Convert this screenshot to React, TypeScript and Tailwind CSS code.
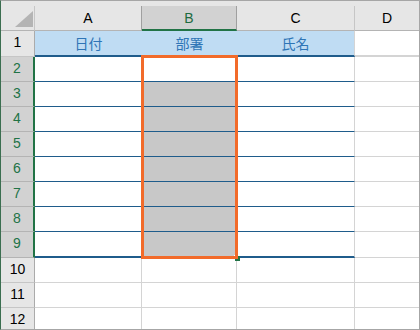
const LATIN = "font-['Liberation_Sans',Arial,sans-serif]";
const CJK = "font-['Noto_Sans_CJK_JP','Noto_Sans_CJK_SC',sans-serif]";

const ROWS = [1, 2, 3, 4, 5, 6, 7, 8, 9, 10, 11, 12];
const TITLES = ['日付', '部署', '氏名'];

function HeaderRow() {
  return (
    <div className="flex h-[30px] pt-[5px] bg-[#e6e6e6]">
      {/* select-all corner */}
      <div className="w-[34px] h-[25px] flex items-end justify-end pr-px pb-[3px] border-r border-r-[#c6c6c6] border-b border-b-[#b4b4b4]">
        <svg width="18" height="16" viewBox="0 0 18 16">
          <polygon points="0,16 18,16 18,0" fill="#b4b4b4" />
        </svg>
      </div>
      <div className={`w-[107px] h-[25px] flex items-center justify-center pt-px text-[14px] text-black border-r border-r-[#a0a0a0] border-b border-b-[#b4b4b4] ${LATIN}`}>
        A
      </div>
      <div className={`w-[95px] h-[25px] flex items-center justify-center pt-[2px] text-[14px] text-[#1e6b3f] bg-[#d2d2d2] border-r border-r-[#a0a0a0] border-b-2 border-b-[#217346] ${LATIN}`}>
        B
      </div>
      <div className={`w-[118px] h-[25px] flex items-center justify-center pt-px text-[14px] text-black border-r border-r-[#c6c6c6] border-b border-b-[#b4b4b4] ${LATIN}`}>
        C
      </div>
      <div className={`flex-1 h-[25px] flex items-center justify-center pt-px text-[14px] text-black border-b border-b-[#b4b4b4] ${LATIN}`}>
        D
      </div>
    </div>
  );
}

function BodyRow({ n }: { n: number }) {
  const table = n <= 9;
  const sel = n >= 2 && n <= 9;
  const thick = n === 1 || n === 9;

  const h = thick ? 'h-[26px]' : 'h-[25px]';
  const line = !table
    ? 'border-b border-b-[#d4d4d4]'
    : thick
      ? 'border-b-2 border-b-[#1f5c8b]'
      : 'border-b border-b-[#1f5c8b]';
  const sep = table ? '' : 'border-r border-r-[#d4d4d4]';
  const head = sel
    ? 'bg-[#d2d2d2] text-[#217346] border-r-2 border-r-[#217346] border-b border-b-[#b4b4b4]'
    : 'bg-[#e6e6e6] text-black border-r border-r-[#ababab] border-b border-b-[#c6c6c6]';
  const fillA = n === 1 ? 'bg-[#bfdcf3]' : 'bg-white';
  const fillB = n === 1 ? 'bg-[#bfdcf3]' : n >= 3 && n <= 9 ? 'bg-[#c8c8c8]' : 'bg-white';

  const title = (i: number) =>
    n === 1 ? <span className={`text-[14px] text-[#2e75b6] ${CJK}`}>{TITLES[i]}</span> : null;

  return (
    <div className={`flex ${h}`}>
      <div className={`w-[34px] flex items-center justify-center pb-[2px] text-[14px] ${head} ${LATIN}`}>{n}</div>
      <div className={`w-[107px] flex items-center justify-center ${fillA} ${line} ${sep}`}>{title(0)}</div>
      <div className={`w-[95px] flex items-center justify-center ${fillB} ${line} ${sep}`}>{title(1)}</div>
      <div className={`w-[118px] flex items-center justify-center ${fillA} ${line} border-r border-r-[#d4d4d4]`}>{title(2)}</div>
      <div className={`flex-1 bg-white ${n === 1 ? 'border-b-2 border-b-[#d4d4d4]' : 'border-b border-b-[#d4d4d4]'}`} />
    </div>
  );
}

export default function App() {
  return (
    <div className="relative w-[420px] h-[330px] overflow-hidden bg-white border-t border-t-[#a6a6a6] border-l border-l-[#3b6e50] border-r border-r-[#a6a6a6] border-b border-b-[#a6a6a6]">
      <HeaderRow />
      {ROWS.map((n) => (
        <BodyRow key={n} n={n} />
      ))}

      {/* fill handle + selection frame */}
      <div className="absolute left-[233px] top-[254px] w-[6px] h-[6px] bg-[#217346] border-l border-t border-white" />
      <div className="absolute left-[140px] top-[54px] w-[97px] h-[204px] border-[3px] border-[#f26b2a]" />
    </div>
  );
}
